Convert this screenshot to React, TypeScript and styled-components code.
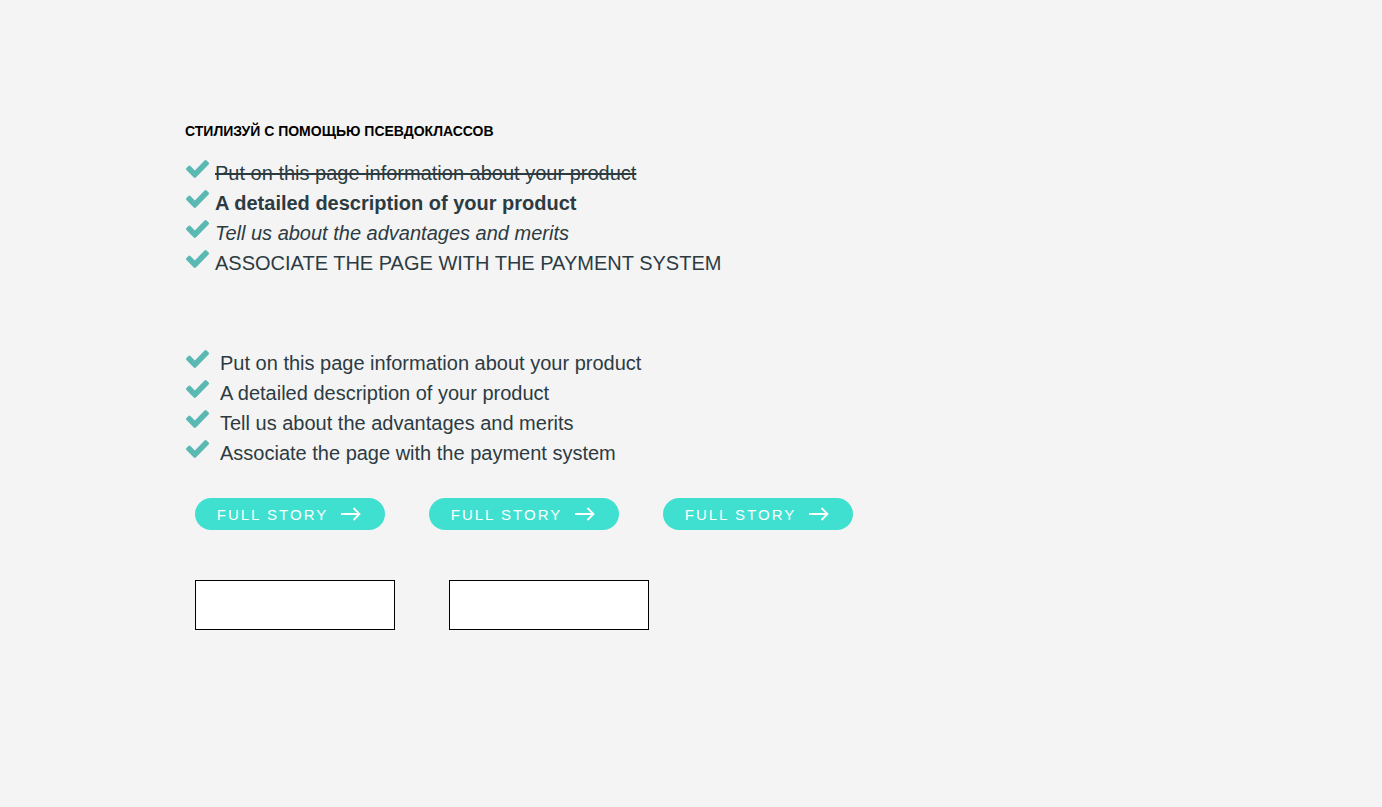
import React from "react";
import styled, { createGlobalStyle, css } from "styled-components";

const Global = createGlobalStyle`
  html, body { margin: 0; padding: 0; background: #f4f4f4; }
  body { font-family: "Liberation Sans", Arial, sans-serif; }
`;

const Page = styled.div`
  padding: 123px 0 0 185px;
  min-height: 807px;
  box-sizing: border-box;
`;

const Title = styled.h2`
  margin: 0 0 19px;
  font-size: 14px;
  line-height: 16px;
  font-weight: 700;
  color: #000;
  text-transform: uppercase;
`;

const List = styled.ul`
  list-style: none;
  margin: 0;
  padding: 0;
`;

type Variant = "strike" | "bold" | "italic" | "upper" | "plain";

const Item = styled.li<{ $v: Variant }>`
  display: flex;
  align-items: flex-start;
  height: 30px;
  font-size: 20px;
  line-height: 30px;
  color: #2c3b42;
  ${(p) => p.$v === "strike" && css`text-decoration: line-through;`}
  ${(p) => p.$v === "bold" && css`font-weight: 700;`}
  ${(p) => p.$v === "italic" && css`font-style: italic;`}
  ${(p) => p.$v === "upper" && css`text-transform: uppercase;`}
`;

const Icon = styled.svg<{ $gap: number }>`
  flex: none;
  width: 23px;
  height: 18px;
  margin: 2px ${(p) => p.$gap}px 0 1px;
  fill: #5ab9b3;
`;

const Check = ({ gap }: { gap: number }) => (
  <Icon $gap={gap} viewBox="121 334 1550 1188" preserveAspectRatio="none">
    <path d="M1671 566q0 40-28 68l-724 724-136 136q-28 28-68 28t-68-28l-136-136-362-362q-28-28-28-68t28-68l136-136q28-28 68-28t68 28l294 295 656-657q28-28 68-28t68 28l136 136q28 28 28 68z" />
  </Icon>
);

const SecondList = styled(List)`
  margin-top: 70px;
`;

const Buttons = styled.div`
  display: flex;
  gap: 44px;
  margin: 30px 0 0 10px;
`;

const StoryButton = styled.button`
  display: flex;
  align-items: center;
  justify-content: center;
  gap: 13px;
  width: 190px;
  height: 32px;
  padding: 0 2px 0 0;
  border: none;
  border-radius: 16px;
  background: #40e0d0;
  color: #fff;
  font-family: "Liberation Sans", Arial, sans-serif;
  font-size: 15px;
  letter-spacing: 2px;
  cursor: pointer;
`;

const Arrow = styled.svg`
  width: 20px;
  height: 14px;
  stroke: #fff;
  fill: none;
  stroke-width: 1.8;
`;

const Boxes = styled.div`
  display: flex;
  gap: 54px;
  margin: 50px 0 0 10px;
`;

const Box = styled.div`
  width: 200px;
  height: 50px;
  box-sizing: border-box;
  background: #fff;
  border: 1px solid #000;
`;

const first: [string, Variant][] = [
  ["Put on this page information about your product", "strike"],
  ["A detailed description of your product", "bold"],
  ["Tell us about the advantages and merits", "italic"],
  ["Associate the page with the payment system", "upper"],
];

const second = [
  "Put on this page information about your product",
  "A detailed description of your product",
  "Tell us about the advantages and merits",
  "Associate the page with the payment system",
];

export default function App() {
  return (
    <>
      <Global />
      <Page>
        <Title>Стилизуй с помощью псевдоклассов</Title>
        <List>
          {first.map(([t, v]) => (
            <Item key={t} $v={v}>
              <Check gap={6} />
              {t}
            </Item>
          ))}
        </List>
        <SecondList>
          {second.map((t) => (
            <Item key={t} $v="plain">
              <Check gap={11} />
              {t}
            </Item>
          ))}
        </SecondList>
        <Buttons>
          {[0, 1, 2].map((i) => (
            <StoryButton key={i}>
              FULL STORY
              <Arrow viewBox="0 0 20 14">
                <path d="M0 7h18.5M12.5 1l6 6-6 6" />
              </Arrow>
            </StoryButton>
          ))}
        </Buttons>
        <Boxes>
          <Box />
          <Box />
        </Boxes>
      </Page>
    </>
  );
}
